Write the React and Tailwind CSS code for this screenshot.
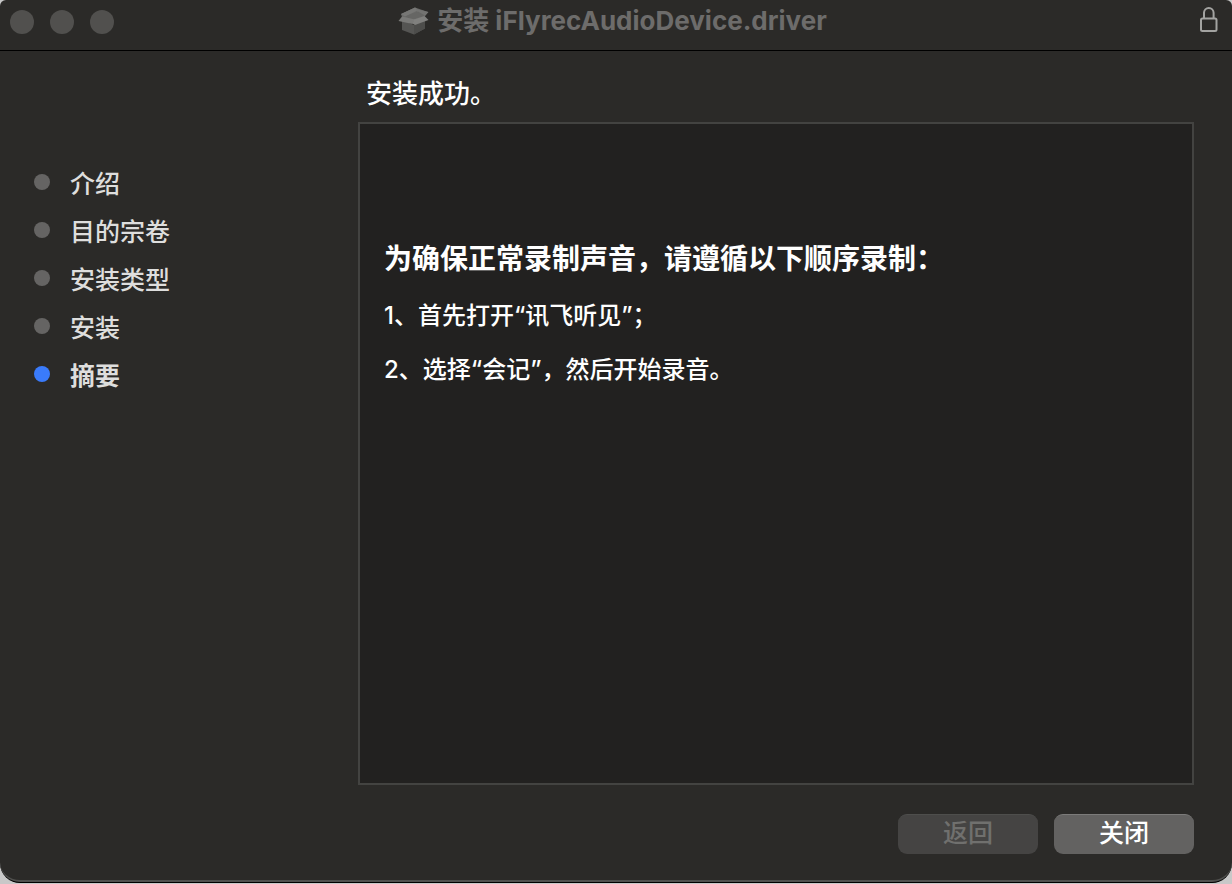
import React from "react";

const steps = ["介绍", "目的宗卷", "安装类型", "安装", "摘要"];
const current = 4;

function PackageIcon() {
  return (
    <svg viewBox="0 0 32 32" className="h-8 w-8 shrink-0" aria-hidden="true">
      <path d="M5 15 L17 20 L28 16 V23.500 L17 29.500 L5 25 Z" fill="#555553" />
      <path d="M17 20 L28 16 V23.500 L17 29.500 Z" fill="#4d4d4b" />
      <path d="M4 9 L18 2.500 L31 7 L27 12 L15 16 L5 12 Z" fill="#6a6a68" />
      <path d="M4 9 L18 2.500 L21.500 5 L8 11.500 Z" fill="#777775" />
      <path d="M19 4 L31.500 7 L27.500 11.500 L21 8.500 Z" fill="#737371" />
      <path d="M8 11.500 L21 6.500 L28 10.500 L15 14.500 Z" fill="#666664" />
      <path d="M5 11.500 L18 14.500 L15.500 19 L1.500 16 Z" fill="#7a7a78" />
      <path d="M17 14.500 L27.500 11 L31.500 15 L18 20 L15.500 18.500 Z" fill="#80807e" />
    </svg>
  );
}

function LockIcon() {
  return (
    <svg viewBox="0 0 20 28" className="h-7 w-5" fill="none" stroke="#a3a3a1" strokeWidth="2" aria-hidden="true">
      <rect x="3" y="12.500" width="15.500" height="12.500" rx="1.500" />
      <path d="M6 12.500 V6.800 a4.800 4.800 0 0 1 9.600 0 V12.500" />
    </svg>
  );
}

export default function App() {
  return (
    <div className="flex min-h-screen flex-col bg-[#c8c8c8] pb-px font-['Inter','Noto_Sans_CJK_SC',sans-serif] font-medium text-[#dededd]">
      <div className="flex grow flex-col overflow-hidden rounded-t-[6px] rounded-b-[20px] border-b border-black bg-[#2b2a28]">
        <div className="flex grow flex-col rounded-b-[20px] border-b-2 border-[#50504e]">
          <header className="grid h-[51px] grid-cols-[1fr_auto_1fr] items-start border-b border-black px-[10px]">
            <div className="flex gap-4 pt-[10px]">
              <button aria-label="关闭窗口" className="h-6 w-6 rounded-full bg-[#51504e]" />
              <button aria-label="最小化" className="h-6 w-6 rounded-full bg-[#51504e]" />
              <button aria-label="缩放" className="h-6 w-6 rounded-full bg-[#51504e]" />
            </div>
            <h1 className="flex h-[42px] items-center gap-2 pr-2 text-[26px] leading-[42px] font-bold text-[#6d6c6b]">
              <PackageIcon />
              <span>安装 iFlyrecAudioDevice.driver</span>
            </h1>
            <button aria-label="证书" className="justify-self-end pt-[6px] pr-1">
              <LockIcon />
            </button>
          </header>

          <div className="flex grow">
            <nav aria-label="安装步骤" className="w-[358px] shrink-0 pt-[107px] pl-[34px]">
              <ol>
                {steps.map((step, i) => (
                  <li
                    key={step}
                    aria-current={i === current ? "step" : undefined}
                    className={`flex h-12 items-center gap-5 text-[25px] ${i === current ? "font-bold" : ""}`}
                  >
                    <span className={`h-4 w-4 rounded-full ${i === current ? "bg-[#3a7bfb]" : "bg-[#656463]"}`} />
                    <span className="pt-1 leading-10">{step}</span>
                  </li>
                ))}
              </ol>
            </nav>

            <main className="flex grow flex-col pr-[38px] pb-[26px]">
              <h2 className="h-[71px] px-2 pt-[21px] text-[26px] leading-[44px] text-white">安装成功。</h2>
              <section className="grow border-2 border-[#434341] bg-[#222120] px-6 pt-[113px] text-white">
                <h3 className="text-[28px] leading-[44px] font-bold">为确保正常录制声音，请遵循以下顺序录制：</h3>
                <p className="mt-[13px] text-[24px] leading-[44px]">1、首先打开“讯飞听见”；</p>
                <p className="mt-[10px] text-[24px] leading-[44px]">2、选择“会记”，然后开始录音。</p>
              </section>
              <div className="mt-[29px] flex justify-end gap-4 text-[25px]">
                <button disabled className="h-10 w-[140px] rounded-[9px] border-t border-[#4e4e4c] bg-[#454443] pb-1 leading-8 text-[#70706e]">
                  返回
                </button>
                <button className="h-10 w-[140px] rounded-[9px] border-t border-[#7c7b7a] bg-[#636261] pb-1 leading-8 text-white">
                  关闭
                </button>
              </div>
            </main>
          </div>
        </div>
      </div>
    </div>
  );
}
